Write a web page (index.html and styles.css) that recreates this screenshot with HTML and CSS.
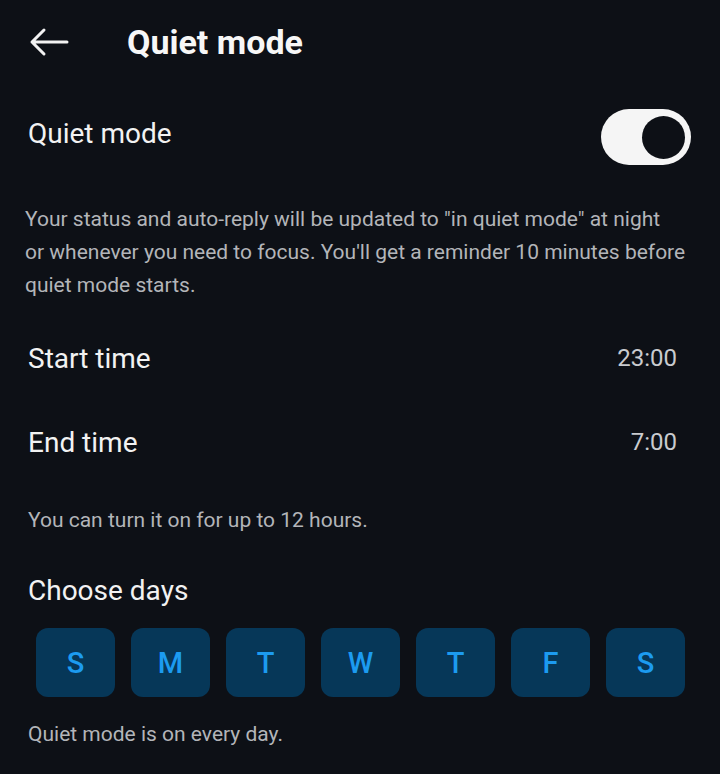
FILE: index.html
```html
<!DOCTYPE html>
<html>
    <head>
        <link rel="stylesheet" href="styles.css">
    </head>

    <body>
        <div class="header">
            <svg class="back" width="40" height="30" viewBox="0 0 40 30">
                <path d="M38 15 H3 M15 3 L3 15 L15 27" fill="none" stroke="#f2f2f2" stroke-width="3" stroke-linecap="round" stroke-linejoin="round"/>
            </svg>
            <h1>Quiet mode</h1>
        </div>

        <div class="row toggle-row">
            <span class="label">Quiet mode</span>
            <div class="toggle"><div class="knob"></div></div>
        </div>

        <p class="desc">Your status and auto-reply will be updated to "in quiet mode" at night<br>or whenever you need to focus. You'll get a reminder 10 minutes before quiet mode starts.</p>

        <div class="row time-row">
            <span class="label">Start time</span>
            <span class="value">23:00</span>
        </div>
        <div class="row time-row">
            <span class="label">End time</span>
            <span class="value">7:00</span>
        </div>

        <p class="hint">You can turn it on for up to 12 hours.</p>

        <div class="label days-title">Choose days</div>
        <div class="days">
            <div class="day">S</div>
            <div class="day">M</div>
            <div class="day">T</div>
            <div class="day">W</div>
            <div class="day">T</div>
            <div class="day">F</div>
            <div class="day">S</div>
        </div>
        <p class="hint footer">Quiet mode is on every day.</p>
    </body>
</html>
```

FILE: styles.css
```css
html {
    background: #0d1016;
}

body {
    margin: 0;
    width: 720px;
    height: 774px;
    overflow: hidden;
    font-family: Roboto, "Noto Sans", sans-serif;
    color: #f2f2f2;
}

.header {
    display: flex;
    align-items: center;
    height: 84px;
    padding-left: 29px;
}

.header .back {
    margin-right: 58px;
}

.header h1 {
    margin: 0;
    font-size: 34px;
    font-weight: 700;
    color: #f7f7f7;
}

.row {
    display: flex;
    align-items: center;
    justify-content: space-between;
    padding-left: 28px;
    padding-right: 43px;
}

.label {
    font-size: 28px;
}

.toggle-row {
    height: 106px;
    padding-right: 29px;
}

.toggle-row .label {
    margin-bottom: 7px;
}

.toggle {
    width: 90px;
    height: 56px;
    border-radius: 28px;
    background: #f5f5f5;
    display: flex;
    align-items: center;
    justify-content: flex-end;
    padding-right: 6px;
    box-sizing: border-box;
}

.knob {
    width: 43px;
    height: 43px;
    border-radius: 50%;
    background: #0d1016;
}

.desc {
    margin: 13px 0 14px 0;
    padding: 0 25px 0 25px;
    font-size: 21px;
    line-height: 33px;
    color: #b3b5b9;
}

.time-row {
    height: 84px;
}

.value {
    font-size: 24px;
    color: #c9cbcf;
}

.hint {
    margin: 21px 0 0 0;
    padding-left: 28px;
    font-size: 21px;
    line-height: 30px;
    color: #b3b5b9;
}

.days-title {
    padding-left: 28px;
    margin-top: 39px;
    line-height: 34px;
}

.days {
    display: flex;
    gap: 16px;
    padding-left: 36px;
    margin-top: 20px;
}

.day {
    width: 79px;
    height: 69px;
    border-radius: 12px;
    background: #063758;
    color: #1c9bf0;
    font-size: 29px;
    font-weight: 500;
    display: flex;
    align-items: center;
    justify-content: center;
}

.footer {
    margin-top: 22px;
}
```
